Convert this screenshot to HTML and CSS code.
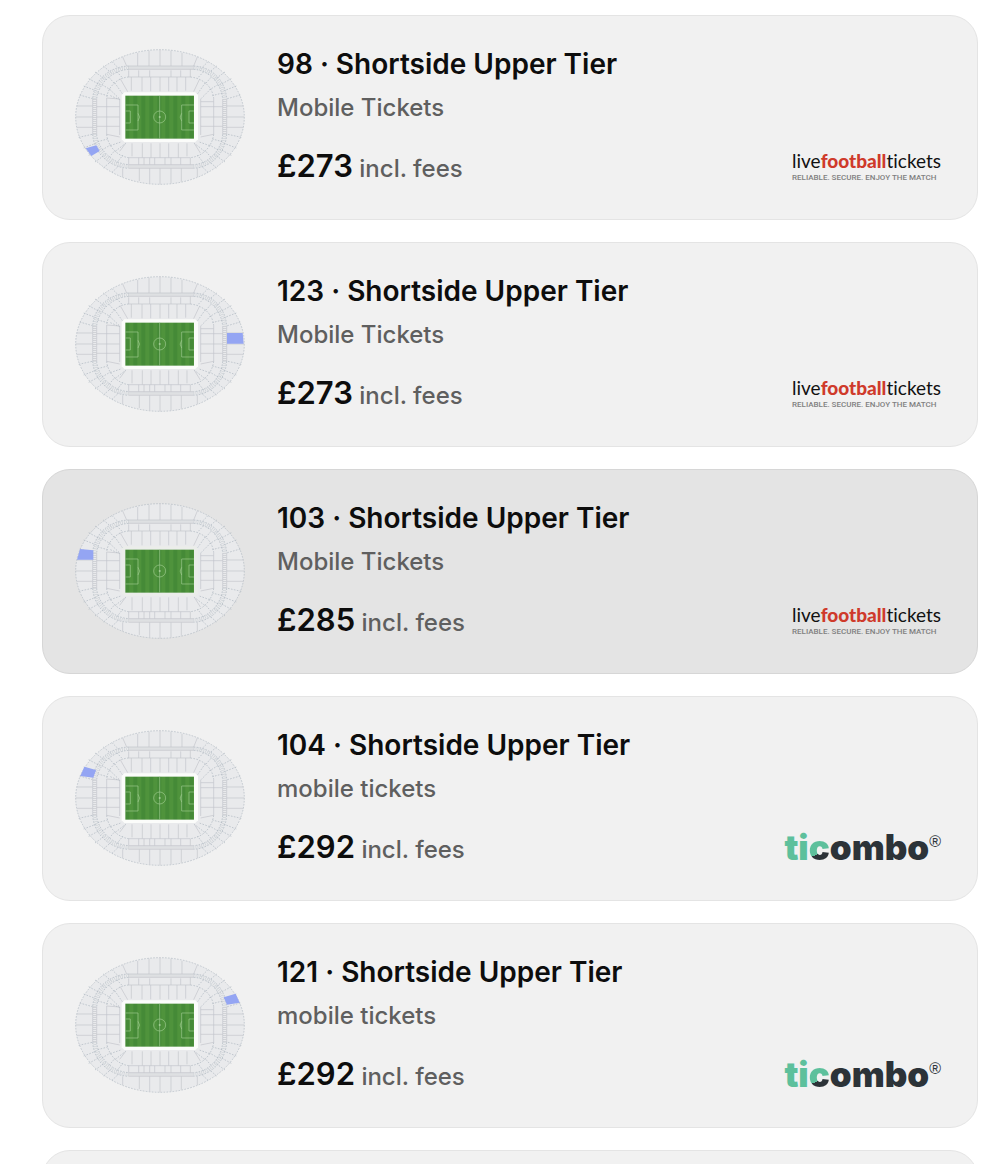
FILE: index.html
```
<!DOCTYPE html>
<html lang="en">
<head>
    <meta charset="UTF-8">
    <meta name="viewport" content="width=device-width, initial-scale=1.0">
    <title>Tickets</title>
    <link rel="stylesheet" href="styles.css">
</head>
<body>
    <!-- shared stadium map, reused by every ticket -->
    <svg class="sprite" aria-hidden="true">
        <defs>
            <pattern id="grass" x="195" y="0" width="24" height="20" patternUnits="userSpaceOnUse">
                <rect width="24" height="20" fill="#4f933c"/>
                <rect width="12" height="20" fill="#458a37"/>
            </pattern>
            <g id="stadium">
                <ellipse class="stand" cx="299" cy="244" rx="253" ry="202"/>
                <ellipse class="seam dots" cx="299" cy="244" rx="253" ry="202"/>
                <!-- upper tier -->
                <path class="seam" d="M232 52V91M266 45V91M299 42V91M332 45V91M365 52V91M187 64L199 91M411 64L400 91M237 398V436M268 398V443M299 398V446M332 398V443M363 398V438M187 398V424M411 398V424M50 211H97M46 244H97M50 275H97M499 211H549M499 244H551M499 275H549"/>
                <path class="seam dots" d="M155 78L177 100M129 91L157 115M104 109L136 132M85 129L120 148M70 151L109 166M58 178L100 190M443 78L421 100M469 91L441 115M494 109L462 132M513 129L478 148M528 151L489 166M540 178L498 190M155 410L177 389M129 397L157 373M104 379L136 356M85 359L120 340M70 337L109 322M55 305L100 295M443 410L421 389M469 397L441 373M494 379L462 356M513 359L478 340M528 337L489 322M543 305L498 295"/>
                <!-- concourse -->
                <path class="concourse" d="M205 96H400M205 392H400M103 190V296M493 190V296"/>
                <path class="seam" d="M205 91H400M205 101H400M205 387H400M205 398H400M97 190V296M109 190V296M487 190V296M499 190V296"/>
                <path class="concourse thin" d="M205 96C150 98 106 140 103 190M400 96C450 98 490 140 493 190M103 296C106 345 150 390 205 392M493 296C490 345 450 390 400 392"/>
                <path class="seam dots" d="M205 91C145 93 100 135 97 190M205 101C156 104 113 145 109 190M400 91C455 93 496 135 499 190M400 101C448 104 483 145 487 190M97 296C100 350 145 395 205 398M109 296C112 340 156 384 205 387M499 296C496 350 455 395 400 398M487 296C484 340 448 384 400 387"/>
                <!-- middle tier -->
                <path class="seam" d="M205 104V124H390V101M235 104V124M268 104V124M332 104V124M361 104V124M109 213H178M109 244H178M109 272H178M139 187V296M139 187L178 190M421 213H487M421 244H487M421 272H487M460 187V296M421 198H460M205 387V366H390V387M235 366V387M251 366V387M268 366V387M283 366V387M314 366V387M332 366V387M361 366V387"/>
                <path class="seam dots" d="M205 124C170 126 142 155 139 187M390 124C430 128 456 155 460 187M139 296C142 330 170 362 205 366M460 296C456 330 430 362 390 366M169 108L188 128M146 125L164 146M125 147L150 162M112 172L142 180M430 108L411 128M452 125L434 146M473 147L448 162M486 172L456 180M169 382L188 358M146 365L164 344M125 343L150 328M112 318L142 310M430 382L411 358M452 365L434 344M473 343L448 328M486 318L456 310"/>
                <!-- lower tier -->
                <path class="seam" d="M213 124V165M245 124V167M271 124V167M299 124V167M325 124V167M350 124V167M376 124V165M179 128L202 168M417 132L400 168M178 190V298M421 190V298M215 323V362M246 323V366M272 323V366M299 323V366M325 323V366M354 323V366M380 323V362M196 323L178 347M402 323L420 352M139 296L178 304M421 304L460 296"/>
                <path class="seam dots" d="M163 141L186 174M147 160L178 190M150 180L178 192M435 141L412 174M451 160L421 190M150 330L184 318M165 347L196 323M448 330L414 318M433 347L402 323"/>
                <!-- pitch -->
                <path class="surround" d="M192 170H405L413 178V311L405 319H192L184 311V178Z"/>
                <rect x="195" y="180" width="206" height="129" fill="url(#grass)"/>
                <path class="line" d="M298 180V309M195 208H233V283H195M195 226H210V262H195M401 208H364V283H401M401 226H386V262H401M233 233Q242 244 233 256M364 233Q355 244 364 256"/>
                <circle class="line" cx="298" cy="244" r="18"/>
                <circle cx="298" cy="244" r="3" fill="#a5cf98"/>
            </g>
        </defs>
    </svg>

    <main class="tickets">
        <a class="ticket" href="#98">
            <svg class="map" viewBox="44 40 510 410" role="img" aria-label="Stadium map, block 98">
                <use href="#stadium"/>
                <path class="block" d="M76 338L108 329L118 346L93 361Z"/>
            </svg>
            <div class="info">
                <h2 class="title">98 · Shortside Upper Tier</h2>
                <p class="type">Mobile Tickets</p>
                <p class="price"><strong>£273</strong> incl. fees</p>
            </div>
            <div class="seller lft">
                <div class="lft-name">live<b>football</b>tickets</div>
                <div class="lft-tag">RELIABLE. SECURE. ENJOY THE MATCH</div>
            </div>
        </a>

        <a class="ticket" href="#123">
            <svg class="map" viewBox="44 40 510 410" role="img" aria-label="Stadium map, block 123">
                <use href="#stadium"/>
                <path class="block" d="M500 211H547L550 243H500Z"/>
            </svg>
            <div class="info">
                <h2 class="title">123 · Shortside Upper Tier</h2>
                <p class="type">Mobile Tickets</p>
                <p class="price"><strong>£273</strong> incl. fees</p>
            </div>
            <div class="seller lft">
                <div class="lft-name">live<b>football</b>tickets</div>
                <div class="lft-tag">RELIABLE. SECURE. ENJOY THE MATCH</div>
            </div>
        </a>

        <a class="ticket active" href="#103">
            <svg class="map" viewBox="44 40 510 410" role="img" aria-label="Stadium map, block 103">
                <use href="#stadium"/>
                <path class="block" d="M59 178L99 182V210H50Z"/>
            </svg>
            <div class="info">
                <h2 class="title">103 · Shortside Upper Tier</h2>
                <p class="type">Mobile Tickets</p>
                <p class="price"><strong>£285</strong> incl. fees</p>
            </div>
            <div class="seller lft">
                <div class="lft-name">live<b>football</b>tickets</div>
                <div class="lft-tag">RELIABLE. SECURE. ENJOY THE MATCH</div>
            </div>
        </a>

        <a class="ticket" href="#104">
            <svg class="map" viewBox="44 40 510 410" role="img" aria-label="Stadium map, block 104">
                <use href="#stadium"/>
                <path class="block" d="M72 150L107 160L99 183L60 178Z"/>
            </svg>
            <div class="info">
                <h2 class="title">104 · Shortside Upper Tier</h2>
                <p class="type">mobile tickets</p>
                <p class="price"><strong>£292</strong> incl. fees</p>
            </div>
            <div class="seller ticombo">
                <span class="green">ti</span><span class="split">c</span>ombo<sup>®</sup>
            </div>
        </a>

        <a class="ticket" href="#121">
            <svg class="map" viewBox="44 40 510 410" role="img" aria-label="Stadium map, block 121">
                <use href="#stadium"/>
                <path class="block" d="M490 161L526 150L538 177L500 183Z"/>
            </svg>
            <div class="info">
                <h2 class="title">121 · Shortside Upper Tier</h2>
                <p class="type">mobile tickets</p>
                <p class="price"><strong>£292</strong> incl. fees</p>
            </div>
            <div class="seller ticombo">
                <span class="green">ti</span><span class="split">c</span>ombo<sup>®</sup>
            </div>
        </a>

        <div class="ticket"></div>
    </main>
</body>
</html>
```
FILE: styles.css
```
* {
    box-sizing: border-box;
}
body {
    font-family: Inter, 'Liberation Sans', sans-serif;
    margin: 0;
    background: #fff;
    color: #0d0d0d;
    height: 100vh;
    overflow: hidden;
}
.sprite {
    position: absolute;
    width: 0;
    height: 0;
}
.tickets {
    display: flex;
    flex-direction: column;
    gap: 22px;
    padding: 15px 12px 0 42px;
}
.ticket {
    --surround: #fbfcfa;
    display: flex;
    align-items: center;
    gap: 32px;
    min-height: 204px;
    padding: 30px 36px 30px 32px;
    background: #f1f1f1;
    border: 1px solid #e4e4e4;
    border-radius: 28px;
    color: inherit;
    text-decoration: none;
}
.ticket.active {
    --surround: #ebedea;
    background: #e4e4e4;
    border-color: #d6d6d6;
}

/* stadium map */
.map {
    width: 170px;
    flex-shrink: 0;
}
.stand {
    fill: #e9eaec;
}
.seam {
    fill: none;
    stroke: #c2c4ca;
    stroke-width: 2;
}
.dots {
    stroke: #adb6c0;
    stroke-dasharray: 5 4;
}
.concourse {
    fill: none;
    stroke: #c9ccd0;
    stroke-width: 10;
    stroke-dasharray: 2 4;
}
.concourse.thin {
    stroke: #cdd2d6;
}
.surround {
    fill: var(--surround);
}
.line {
    fill: none;
    stroke: #9fcb90;
    stroke-width: 2;
}
.block {
    fill: #94a5f3;
}

.info {
    flex: 1;
}
.title {
    margin: 0;
    font-size: 28px;
    line-height: 36px;
    font-weight: 600;
}
.type {
    margin: 8px 0 22px;
    font-size: 24px;
    line-height: 36px;
    font-weight: 500;
    color: #5f5f5f;
}
.price {
    margin: 0;
    font-size: 24px;
    line-height: 40px;
    font-weight: 500;
    color: #5f5f5f;
}
.price strong {
    font-size: 31px;
    line-height: 36px;
    font-weight: 600;
    color: #0d0d0d;
}

/* sellers */
.seller {
    align-self: flex-end;
    white-space: nowrap;
}
.lft {
    padding-bottom: 6px;
}
.lft-name {
    font-family: Lato, sans-serif;
    font-size: 19px;
    line-height: 24px;
    color: #111;
    font-variant-ligatures: none;
}
.lft-name b {
    color: #cf3a2b;
    font-weight: 900;
}
.lft-tag {
    font-family: Roboto, sans-serif;
    font-size: 8px;
    line-height: 10px;
    font-weight: 500;
    color: #808080;
}
.ticombo {
    padding-bottom: 3px;
    font-size: 35px;
    line-height: 40px;
    font-weight: 900;
    color: #2c3338;
}
.green {
    color: #5dc09c;
}
.split {
    color: transparent;
    background: linear-gradient(155deg, #5dc09c 62%, #2c3338 62%);
    background-clip: text;
    -webkit-background-clip: text;
}
.ticombo sup {
    font-family: 'Liberation Sans', sans-serif;
    font-size: 16px;
    line-height: 16px;
    font-weight: 400;
}
```
